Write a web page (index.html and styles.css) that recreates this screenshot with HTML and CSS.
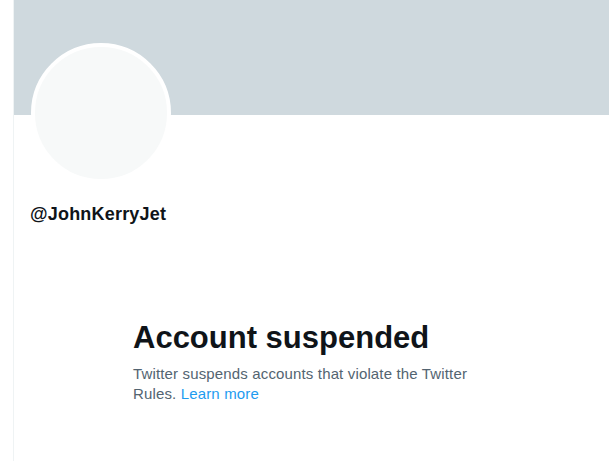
FILE: index.html
```html
<!DOCTYPE html>
<html lang="en">
<head>
<meta charset="utf-8">
<title>@JohnKerryJet</title>
<link rel="stylesheet" href="styles.css">
</head>
<body>
<div class="page">
  <main class="column">
    <div class="banner"></div>
    <div class="profile">
      <div class="avatar"></div>
      <div class="handle">@JohnKerryJet</div>
    </div>
    <section class="empty">
      <h1 class="empty-title">Account suspended</h1>
      <p class="empty-text">Twitter suspends accounts that violate the Twitter Rules. <a class="link" href="#">Learn more</a></p>
    </section>
  </main>
</div>
</body>
</html>
```

FILE: styles.css
```css
html, body {
  margin: 0;
  padding: 0;
  background: #ffffff;
}

body {
  font-family: "Liberation Sans", Arial, sans-serif;
  color: #0f1419;
}

.page {
  display: flex;
  padding-left: 13px;
  min-height: 100vh;
}

.column {
  width: 600px;
  flex-shrink: 0;
  border-left: 1px solid #eff3f4;
  min-height: 100vh;
}

.banner {
  height: 115px;
  background: #cfd9de;
}

.profile {
  padding: 0 16px;
}

.avatar {
  width: 132px;
  height: 132px;
  margin-top: -72px;
  margin-left: 1px;
  border: 4px solid #ffffff;
  border-radius: 50%;
  background: #f7f9f9;
}

.handle {
  margin-top: 19px;
  font-size: 18px;
  line-height: 24px;
  font-weight: 700;
  letter-spacing: 0.2px;
}

.empty {
  margin-top: 94px;
  padding-left: 119px;
  max-width: 345px;
}

.empty-title {
  margin: 0 0 8px;
  font-size: 31px;
  line-height: 36px;
  font-weight: 700;
  color: #0f1419;
}

.empty-text {
  margin: 0;
  font-size: 15px;
  line-height: 20px;
  letter-spacing: 0.15px;
  color: #536471;
}

.link {
  color: #1d9bf0;
  text-decoration: none;
}
```
